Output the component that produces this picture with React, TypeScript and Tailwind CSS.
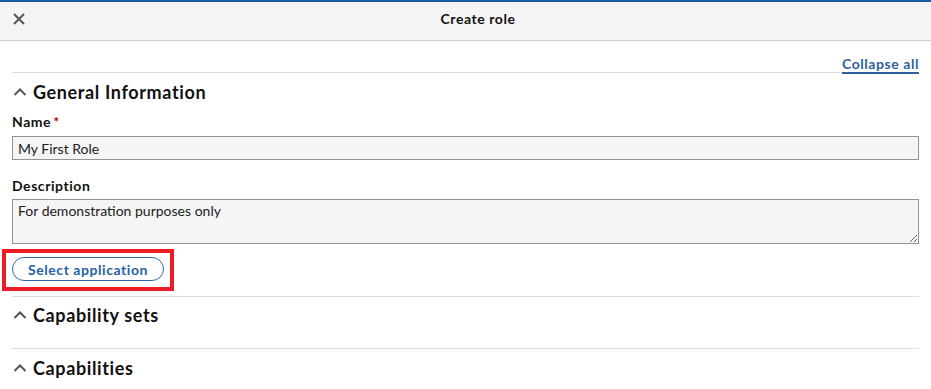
import React from 'react';

const font = { fontFamily: 'Lato, "Noto Sans", sans-serif' };

const Chevron = () => (
  <svg width="14" height="14" viewBox="0 0 14 14" className="shrink-0 text-[#555]">
    <polyline points="1.5,10 7,4.5 12.5,10" fill="none" stroke="currentColor" strokeWidth="2" />
  </svg>
);

const SectionHeading = ({ title, tight }: { title: string; tight?: boolean }) => (
  <div className={tight ? 'flex h-[35px] items-center gap-[6px] pl-[1px]' : 'flex h-[38px] items-center gap-[6px] pl-[1px]'}>
    <Chevron />
    <h2 className="text-[18px] font-bold leading-none tracking-[0.035em] text-[#111]">{title}</h2>
  </div>
);

const CreateRole = () => {
  return (
    <div className="min-h-screen w-full bg-white text-[#111]" style={font}>
      <div className="border-t-2 border-b border-t-[#1a5a9c] border-b-[#cfcfcf] bg-[#f5f5f5]">
        <div className="flex h-[38px] items-center pb-[5px]">
          <button className="ml-[13px] flex w-[12px] items-center justify-center text-[#555]">
            <svg width="12" height="12" viewBox="0 0 12 12">
              <path d="M1 1 L11 11 M11 1 L1 11" stroke="currentColor" strokeWidth="2" fill="none" />
            </svg>
          </button>
          <div className="flex-1 text-center text-[14px] font-bold tracking-[0.04em]">Create role</div>
        </div>
      </div>

      <div className="px-3">
        <div className="flex h-[32px] items-end justify-end border-b border-[#dddddd]">
          <a
            href="#"
            className="mb-[-1px] text-[14px] font-bold leading-[18px] tracking-[0.04em] text-[#2f5f9d] underline decoration-[1.5px] underline-offset-[3px]"
          >
            Collapse all
          </a>
        </div>

        <section>
          <SectionHeading title="General Information" />
          <div className="mt-[1px] text-[14px] font-bold leading-[20px] tracking-[0.04em]">
            Name<span className="ml-[2px] text-[#a50d0d]">*</span>
          </div>
          <input
            className="mt-[4px] block h-[24px] w-full border border-[#949494] bg-[#f5f5f5] px-[5px] text-[14px] text-[#222] outline-none"
            style={font}
            defaultValue="My First Role"
          />
          <div className="mt-[16px] text-[14px] font-bold leading-[20px] tracking-[0.04em]">Description</div>
          <textarea
            className="mt-[3px] block h-[45px] w-full border border-[#949494] bg-[#f5f5f5] px-[5px] pt-[2px] text-[14px] leading-[18px] text-[#222] outline-none"
            style={font}
            defaultValue="For demonstration purposes only"
          />
          <div className="flex pt-[13px] pb-[15px]">
            <div className="relative">
              <button className="block h-[24px] rounded-full border border-[#2c66a6] px-[15px] text-[14px] font-bold tracking-[0.04em] text-[#2462a3]">
                Select application
              </button>
              <div className="pointer-events-none absolute -top-[8px] -bottom-[10px] -left-[10px] -right-[10px] border-4 border-[#ec1c24]" />
            </div>
          </div>
        </section>

        <section className="border-t border-[#dddddd] pb-[16px]">
          <SectionHeading title="Capability sets" tight />
        </section>

        <section className="border-t border-[#dddddd] pb-[13px]">
          <SectionHeading title="Capabilities" />
        </section>
      </div>
    </div>
  );
};

export default CreateRole;
